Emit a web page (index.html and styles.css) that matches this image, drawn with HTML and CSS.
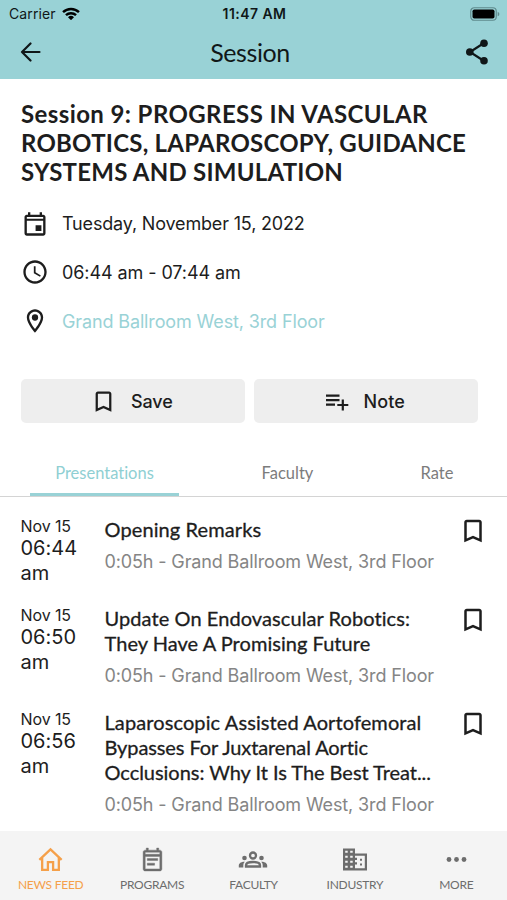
FILE: index.html
```html
<!DOCTYPE html>
<html lang="en">
<head>
<meta charset="utf-8">
<title>Session</title>
<link rel="stylesheet" href="styles.css">
</head>
<body>
<svg class="defs" aria-hidden="true">
  <symbol id="bookmark" viewBox="0 0 24 24"><path d="M17 3H7c-1.100 0-2 .9-2 2v16l7-3 7 3V5c0-1.100-.9-2-2-2zm0 15l-5-2.180L7 18V5h10v13z"/></symbol>
</svg>
<div class="app">
  <header class="header">
    <div class="status">
      <div class="carrier"><span class="carrier-name">Carrier</span>
        <svg class="wifi" viewBox="0 0 18 13"><path d="M.2 4.300a12.500 12.500 0 0 1 17.600 0l-1.700 1.800a10.100 10.100 0 0 0-14.200 0z"/><path d="M3.100 7.300a8.400 8.400 0 0 1 11.800 0l-1.700 1.800a6 6 0 0 0-8.400 0z"/><path d="M6 10.200a4.300 4.300 0 0 1 6 0l-3 3z"/></svg>
      </div>
      <div class="clock">11:47 AM</div>
      <div class="power"><svg class="battery" viewBox="0 0 30 14"><rect x=".75" y=".75" width="25.500" height="12.500" rx="3.500" fill="none" stroke="#5f8a8d" stroke-width="1.200"/><rect x="2.500" y="2.500" width="22" height="9" rx="1.800"/><path d="M27.700 4.700v4.600q1.700-.7 1.700-2.300t-1.700-2.300z" fill="#5f8a8d"/></svg></div>
    </div>
    <div class="bar">
      <svg class="back line" viewBox="0 0 22 20" stroke-width="2.200" stroke-linecap="round" stroke-linejoin="round"><path d="M19.500 10H2M10.500 1.500L2 10l8.500 8.500"/></svg>
      <h1 class="bar-title">Session</h1>
      <svg class="share" viewBox="0 0 24 26"><path d="M19 4L5 13l14 9" fill="none" stroke="#101718" stroke-width="2.200"/><circle cx="19" cy="4.200" r="3.800"/><circle cx="4.800" cy="13" r="3.800"/><circle cx="19" cy="21.800" r="3.800"/></svg>
    </div>
  </header>

  <main class="main">
    <section class="summary">
      <h2 class="heading"><span class="h-a">Session 9: PROGRESS IN VASCULAR</span><span class="h-b">ROBOTICS, LAPAROSCOPY, GUIDANCE</span><span class="h-c">SYSTEMS AND SIMULATION</span></h2>
      <div class="facts">
        <div class="fact"><svg class="fact-icon" viewBox="0 0 24 24"><path d="M19 4h-1V2h-2v2H8V2H6v2H5c-1.110 0-1.990.9-1.990 2L3 20c0 1.100.89 2 2 2h14c1.100 0 2-.9 2-2V6c0-1.100-.9-2-2-2zm0 16H5V9.300h14V20zm0-12.500H5V6h14v1.500zM12.500 13h5v5h-5z"/></svg><span class="date">Tuesday, November 15, 2022</span></div>
        <div class="fact"><svg class="fact-icon" viewBox="0 0 24 24"><path d="M11.990 2C6.470 2 2 6.480 2 12s4.470 10 9.990 10C17.520 22 22 17.520 22 12S17.520 2 11.990 2zM12 20c-4.420 0-8-3.580-8-8s3.580-8 8-8 8 3.580 8 8-3.580 8-8 8zm.5-13H11v6l5.250 3.150.75-1.230-4.500-2.670z"/></svg><span class="hours">06:44 am - 07:44 am</span></div>
        <div class="fact"><svg class="fact-icon" viewBox="0 0 24 24"><path d="M12 2C8.130 2 5 5.130 5 9c0 5.250 7 13 7 13s7-7.750 7-13c0-3.870-3.130-7-7-7zM7 9c0-2.760 2.240-5 5-5s5 2.240 5 5c0 2.880-2.880 7.190-5 9.880C9.920 16.210 7 11.850 7 9z"/><circle cx="12" cy="9" r="2.700"/></svg><span class="place">Grand Ballroom West, 3rd Floor</span></div>
      </div>
      <div class="actions">
        <div class="button"><svg class="save-icon"><use href="#bookmark"/></svg><span>Save</span></div>
        <div class="button note"><svg class="note-icon line" viewBox="0 0 24 18" stroke-width="2.200"><path d="M1 2.700h13.500M1 7.200h13.500M1 11.700h9M17.800 6.500v11M12.300 12h11"/></svg><span>Note</span></div>
      </div>
    </section>

    <nav class="tabs">
      <div class="tab tab-presentations">Presentations</div>
      <div class="tab tab-faculty">Faculty</div>
      <div class="tab tab-rate">Rate</div>
    </nav>

    <section class="list">
      <article class="item">
        <div class="when"><div class="day">Nov 15</div><div class="time">06:44<br>am</div></div>
        <div class="talk"><h3 class="talk-title"><span class="t-a">Opening Remarks</span></h3><div class="talk-place">0:05h - Grand Ballroom West, 3rd Floor</div></div>
        <svg class="mark"><use href="#bookmark"/></svg>
      </article>
      <article class="item">
        <div class="when"><div class="day">Nov 15</div><div class="time">06:50<br>am</div></div>
        <div class="talk"><h3 class="talk-title"><span class="t-b">Update On Endovascular Robotics:</span><span class="t-c">They Have A Promising Future</span></h3><div class="talk-place">0:05h - Grand Ballroom West, 3rd Floor</div></div>
        <svg class="mark"><use href="#bookmark"/></svg>
      </article>
      <article class="item">
        <div class="when"><div class="day">Nov 15</div><div class="time">06:56<br>am</div></div>
        <div class="talk"><h3 class="talk-title"><span class="t-d">Laparoscopic Assisted Aortofemoral</span><span class="t-e">Bypasses For Juxtarenal Aortic</span><span class="t-f">Occlusions: Why It Is The Best Treat...</span></h3><div class="talk-place">0:05h - Grand Ballroom West, 3rd Floor</div></div>
        <svg class="mark"><use href="#bookmark"/></svg>
      </article>
    </section>
  </main>

  <footer class="nav">
    <div class="nav-item active"><svg class="nav-icon line" viewBox="0 0 24 24" stroke-width="2.200"><path d="M1.300 12.300L12 2.300l10.700 10M4 10.500V22h5.500v-7.500h5V22H20V10.500"/></svg><span>NEWS FEED</span></div>
    <div class="nav-item"><svg class="nav-icon" viewBox="0 0 24 24"><path d="M19 3h-1V1h-2v2H8V1H6v2H5c-1.100 0-2 .9-2 2v16c0 1.100.9 2 2 2h14c1.100 0 2-.9 2-2V5c0-1.100-.9-2-2-2zm0 18H5V9h14v12zm0-14H5V5h14v2zM7 11h10v2H7zM7 15.500h7v2H7z" stroke="currentColor" stroke-width=".4"/></svg><span>PROGRAMS</span></div>
    <div class="nav-item"><svg class="nav-icon people line" viewBox="0 0 30 20" stroke-width="2.300"><circle cx="15" cy="6" r="3"/><path d="M8 17v-1.200c0-4.400 14-4.400 14 0V17z"/><g class="solid"><circle cx="6.500" cy="8.500" r="2.300"/><circle cx="23.500" cy="8.500" r="2.300"/><path d="M6.800 12.200C2.500 12 .8 14.500.8 16v2h4.500v-2.500q0-1.800 1.500-3.300zM23.200 12.200c4.300-.2 6 2.300 6 3.800v2h-4.500v-2.500q0-1.800-1.500-3.300z"/></g></svg><span>FACULTY</span></div>
    <div class="nav-item"><svg class="nav-icon building" viewBox="0 0 26 24"><path fill-rule="evenodd" d="M1 1h12v5h12v17H1zm2.200 2.200v2h2.500v-2zm5 0v2h2.500v-2zm-5 5v2h2.500v-2zm5 0v2h2.500v-2zm-5 5v2h2.500v-2zm5 0v2h2.500v-2zm-5 5v2h2.500v-2zm5 0v2h2.500v-2zM13 8.200v2h2v2.300h-2v2.200h2V17h-2v3.800h9.800V8.200z"/><path d="M18 11.200h2v2h-2zM18 16h2v2h-2z"/></svg><span>INDUSTRY</span></div>
    <div class="nav-item"><svg class="nav-icon" viewBox="0 0 24 24"><circle cx="4.800" cy="12" r="2.300"/><circle cx="12" cy="12" r="2.300"/><circle cx="19.200" cy="12" r="2.300"/></svg><span>MORE</span></div>
  </footer>
</div>
</body>
</html>
```
FILE: styles.css
```css
* { box-sizing: border-box; }
body { margin: 0; background: #fff; color: #1d1d1d; font-family: Inter, "Liberation Sans", sans-serif; font-variant-ligatures: none; }
h1, h2, h3 { margin: 0; font-family: Lato, sans-serif; }
svg { display: block; fill: currentColor; flex: none; }
.line { fill: none; stroke: currentColor; }
.solid { fill: currentColor; stroke: none; }
.defs { position: absolute; width: 0; height: 0; }
.app { width: 507px; height: 900px; display: flex; flex-direction: column; overflow: hidden; white-space: nowrap; }

.header { height: 79px; flex: none; background: #99d2d6; color: #101718; }
.status { height: 27px; padding: 0 7px 0 9px; display: grid; grid-template-columns: 1fr auto 1fr; align-items: center; font-size: 14px; }
.carrier { display: flex; align-items: center; gap: 6px; }
.carrier-name { letter-spacing: .1px; }
.wifi { width: 18px; height: 13px; color: #000; }
.clock { font-weight: 600; letter-spacing: .45px; }
.power { display: flex; justify-content: flex-end; }
.battery { width: 30px; height: 14px; color: #000; }
.bar { height: 50px; padding: 0 18px 0 20px; display: grid; grid-template-columns: 1fr auto 1fr; align-items: center; }
.back { width: 22px; height: 20px; }
.bar-title { margin-right: 9px; font-size: 25px; line-height: 30px; font-weight: 400; letter-spacing: -.4px; }
.share { width: 24px; height: 26px; justify-self: end; }

.main { flex: 1; min-height: 0; overflow: hidden; }
.summary { padding: 19.500px 21px 0; }
.heading { font-size: 24px; line-height: 29.200px; font-weight: 700; letter-spacing: .24px; }
.h-a { letter-spacing: .4px; }
.heading span, .talk-title span { display: block; }
.facts { margin-top: 13px; }
.fact { height: 48.900px; display: flex; align-items: center; gap: 13px; font-size: 18px; }
.fact-icon { width: 28px; height: 28px; }
.date { letter-spacing: -.17px; }
.hours { letter-spacing: -.08px; }
.place { letter-spacing: -.13px; color: #99d2d6; }
.actions { display: flex; gap: 9.500px; margin-top: 33.400px; }
.button { width: 223.500px; height: 44px; border-radius: 5px; background: #eee; display: flex; align-items: center; padding-left: 69px; gap: 14px; font-size: 18px; font-weight: 500; letter-spacing: -.1px; }
.save-icon { width: 27px; height: 27px; }
.note-icon { width: 24px; height: 18px; margin-top: 2px; }
.note { padding-left: 70.500px; gap: 15px; letter-spacing: .1px; }

.tabs { height: 52px; margin-top: 21.500px; padding-left: 1px; border-bottom: 1px solid #d4d4d4; display: flex; justify-content: space-around; font-family: Lato, sans-serif; font-size: 16.500px; color: #7c7c7c; }
.tab { height: 51px; line-height: 56px; text-align: center; }
.tab-presentations { width: 149px; color: #8fcfd3; border-bottom: 3px solid #99d2d6; }
.tab-faculty { width: 101px; }
.tab-rate { width: 82px; }

.list { padding: 20px 20.500px 0; }
.item { display: flex; align-items: flex-start; }
.when { width: 84px; flex: none; padding-bottom: 20px; }
.day { font-size: 16px; line-height: 19px; letter-spacing: -.1px; }
.time { font-size: 20px; line-height: 25px; }
.talk { width: 353px; flex: none; padding-bottom: 22.400px; }
.talk-title { font-size: 20px; line-height: 25.300px; font-weight: 400; -webkit-text-stroke: .3px currentColor; }
.t-a { letter-spacing: .1px; }
.t-b { letter-spacing: .08px; }
.t-c { letter-spacing: .04px; }
.t-d { letter-spacing: .1px; }
.t-e { letter-spacing: -.1px; }
.t-f { letter-spacing: -.04px; }
.talk-place { margin-top: 8.900px; font-size: 18px; line-height: 22px; letter-spacing: -.13px; color: #858585; }
.mark { width: 30px; height: 30px; margin-top: -1px; }

.nav { height: 69px; flex: none; background: #f4f4f4; display: grid; grid-template-columns: repeat(5, 1fr); font-family: Lato, sans-serif; font-size: 12px; letter-spacing: -.25px; color: #6d6d6d; }
.nav-item { display: flex; flex-direction: column; align-items: center; padding-top: 16px; line-height: 16px; gap: 5px; }
.nav-icon { width: 25px; height: 25px; }
.people { width: 30px; }
.building { width: 26px; }
.active { color: #f5a04a; }
```
